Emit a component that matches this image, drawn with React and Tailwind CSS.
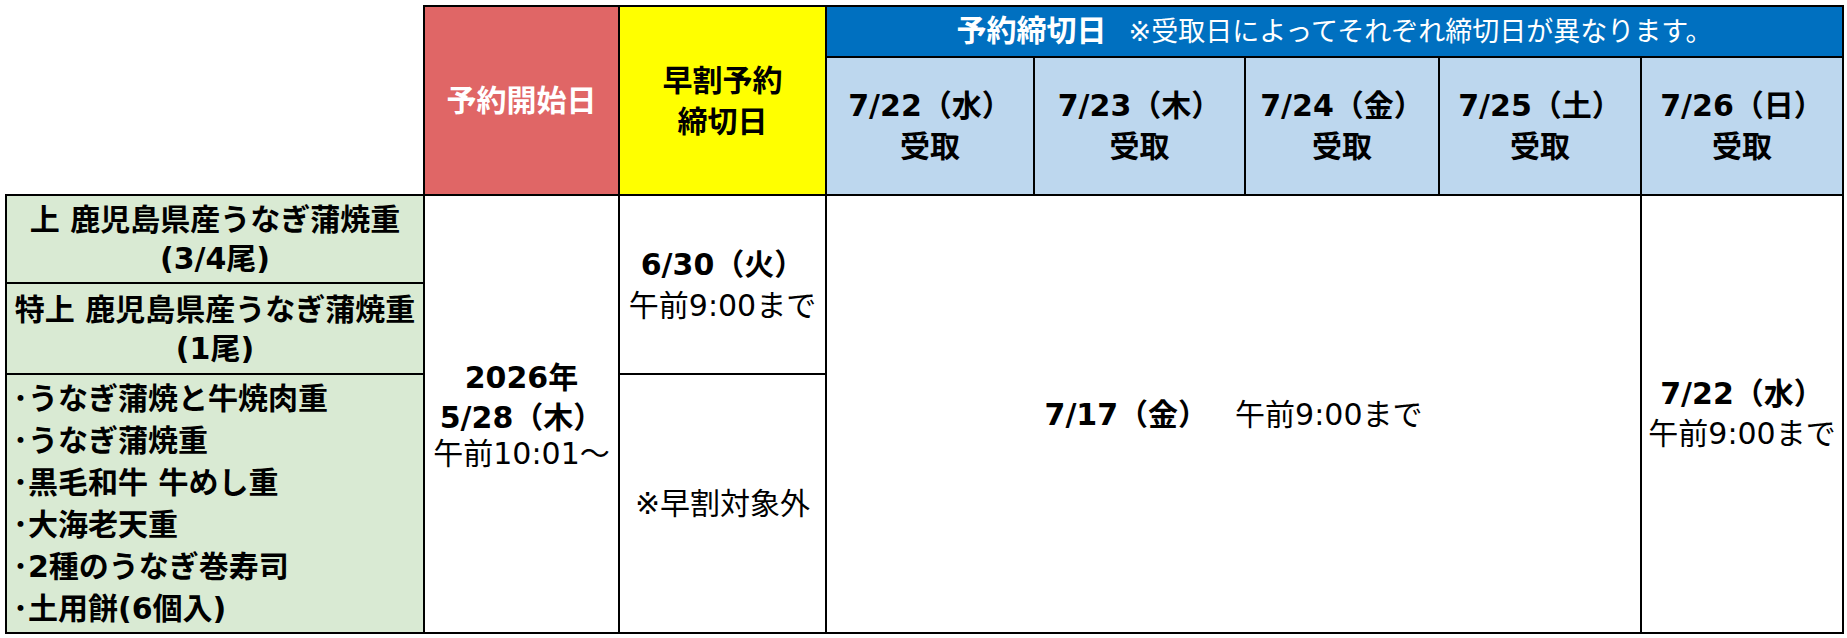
import React from 'react';

// Meiryo-like: Verdana-ish latin + CJK fallback
const font = { fontFamily: '"DejaVu Sans", "Noto Sans CJK JP", sans-serif' };

const days = ['7/22（水）', '7/23（木）', '7/24（金）', '7/25（土）', '7/26（日）'];

const items = [
    '･うなぎ蒲焼と牛焼肉重',
    '･うなぎ蒲焼重',
    '･黒毛和牛 牛めし重',
    '･大海老天重',
    '･2種のうなぎ巻寿司',
    '･土用餅(6個入)',
];

const App = () => {
    return (
        <div className="min-h-screen bg-white pt-[5px] pl-[5px]" style={font}>
            <table className="table-fixed border-collapse text-black text-[30px]">
                <colgroup>
                    <col className="w-[418px]" />
                    <col className="w-[195px]" />
                    <col className="w-[207px]" />
                    <col className="w-[208px]" />
                    <col className="w-[211px]" />
                    <col className="w-[194px]" />
                    <col className="w-[202px]" />
                    <col className="w-[202px]" />
                </colgroup>
                <tbody>
                    <tr className="h-[51px]">
                        <td rowSpan={2} className="p-0"></td>
                        <td rowSpan={2} className="p-0 border-2 border-black bg-[#e06666] text-white font-bold text-center leading-[40px]">
                            予約開始日
                        </td>
                        <td rowSpan={2} className="p-0 border-2 border-black bg-[#ffff00] font-bold text-center leading-[41px]">
                            早割予約
                            <br />
                            締切日
                        </td>
                        <td colSpan={5} className="p-0 border-2 border-black bg-[#0070c0] text-white text-center leading-[40px]">
                            <span className="font-bold">予約締切日</span>
                            <span className="ml-[22px] text-[27px]">※受取日によってそれぞれ締切日が異なります。</span>
                        </td>
                    </tr>
                    <tr className="h-[138px]">
                        {days.map((d) => (
                            <td key={d} className="p-0 border-2 border-black bg-[#bdd7ee] font-bold text-center leading-[41px]">
                                {d}
                                <br />
                                受取
                            </td>
                        ))}
                    </tr>
                    <tr className="h-[88px]">
                        <td className="p-0 border-2 border-black bg-[#d9ead3] font-bold text-center leading-[39px]">
                            上 鹿児島県産うなぎ蒲焼重
                            <br />
                            (3/4尾)
                        </td>
                        <td rowSpan={3} className="p-0 border-2 border-black text-center">
                            <div className="font-bold leading-[42px]">2026年</div>
                            <div className="font-bold leading-[38px]">5/28（木）</div>
                            <div className="leading-[34px]">午前10:01～</div>
                        </td>
                        <td rowSpan={2} className="p-0 border-2 border-black text-center">
                            <div className="font-bold leading-[42px]">6/30（火）</div>
                            <div className="leading-[40px]">午前9:00まで</div>
                        </td>
                        <td rowSpan={3} colSpan={4} className="p-0 border-2 border-black text-center">
                            <span className="font-bold">7/17（金）</span>
                            <span className="ml-[27px]">午前9:00まで</span>
                        </td>
                        <td rowSpan={3} className="p-0 border-2 border-black text-center">
                            <div className="font-bold leading-[40px]">7/22（水）</div>
                            <div className="leading-[40px]">午前9:00まで</div>
                        </td>
                    </tr>
                    <tr className="h-[91px]">
                        <td className="p-0 border-2 border-black bg-[#d9ead3] font-bold text-center leading-[39px]">
                            特上 鹿児島県産うなぎ蒲焼重
                            <br />
                            (1尾)
                        </td>
                    </tr>
                    <tr className="h-[259px]">
                        <td className="p-0 pl-[6px] border-2 border-black bg-[#d9ead3] font-bold text-left">
                            {items.map((it) => (
                                <div key={it} className="leading-[42px]">{it}</div>
                            ))}
                        </td>
                        <td className="p-0 border-2 border-black text-center">※早割対象外</td>
                    </tr>
                </tbody>
            </table>
        </div>
    );
};

export default App;
